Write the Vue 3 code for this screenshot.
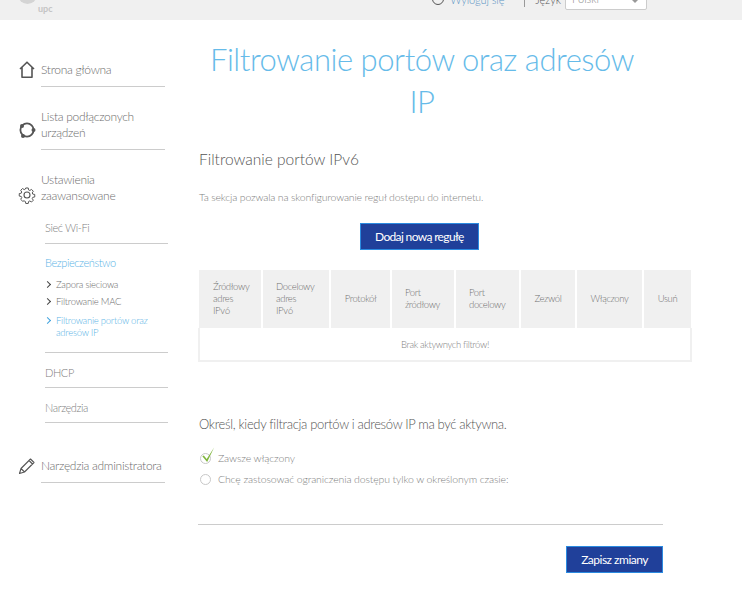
<script setup>
const columns = [
  { label: 'Źródłowy adres IPv6', cls: 'c1' },
  { label: 'Docelowy adres IPv6', cls: 'c2' },
  { label: 'Protokół', cls: 'c3 mid' },
  { label: 'Port źródłowy', cls: 'c4' },
  { label: 'Port docelowy', cls: 'c5' },
  { label: 'Zezwól', cls: 'c6 mid' },
  { label: 'Włączony', cls: 'c7 mid' },
  { label: 'Usuń', cls: 'c8 mid' }
]
</script>

<template>
  <div class="page">
    <header class="top">
      <div class="logo">
        <span class="logo-mark"></span>
        <span class="logo-text">upc</span>
      </div>
      <div class="top-right">
        <span class="power"></span>
        <span class="logout">Wyloguj się</span>
        <span class="sep"></span>
        <span class="lang">Język</span>
        <div class="select"><span>Polski</span><i></i></div>
      </div>
    </header>

    <div class="body">
      <aside class="side">
        <div class="nav-item first">
          <svg class="ico" viewBox="0 0 18 18"><path d="M2 8 9 1.2 16 8M4 6.5V16.2h10V6.5" fill="none" stroke="#555" stroke-width="1.6" stroke-linejoin="round"/></svg>
          <div class="nav-label">Strona główna</div>
        </div>
        <div class="nav-item second">
          <svg class="ico" viewBox="0 0 18 18"><circle cx="9" cy="9" r="6.6" fill="none" stroke="#555" stroke-width="1.8"/><circle cx="4" cy="5" r="2" fill="#555"/><circle cx="15.5" cy="9" r="2" fill="#555"/><circle cx="5" cy="15" r="2" fill="#555"/></svg>
          <div class="nav-label">Lista podłączonych urządzeń</div>
        </div>
        <div class="nav-item third">
          <svg class="ico gear" viewBox="0 0 18 18"><path d="M7.6 1.2h2.8l.4 2.2 1.3.6 1.9-1.2 2 2-1.2 1.9.6 1.3 2.2.4v2.8l-2.2.4-.6 1.3 1.2 1.9-2 2-1.9-1.2-1.3.6-.4 2.2H7.6l-.4-2.2-1.3-.6L4 15.8l-2-2 1.2-1.9-.6-1.3-2.2-.4V7.4l2.2-.4.6-1.3L2 3.8l2-2 1.9 1.2 1.3-.6z" transform="translate(.9 .9) scale(.9)" fill="none" stroke="#555" stroke-width="1.1" stroke-linejoin="round"/><circle cx="9" cy="9" r="3" fill="none" stroke="#555" stroke-width="1.1"/></svg>
          <div class="nav-label plain">Ustawienia zaawansowane</div>
        </div>

        <div class="sub">
          <div class="sub-item wifi">Sieć Wi-Fi</div>
          <div class="sub-item active-group">
            <div class="group-title">Bezpieczeństwo</div>
            <div class="leaf"><b class="chev"></b><span>Zapora sieciowa</span></div>
            <div class="leaf"><b class="chev"></b><span>Filtrowanie MAC</span></div>
            <div class="leaf on"><b class="chev"></b><span>Filtrowanie portów oraz adresów IP</span></div>
          </div>
          <div class="sub-item">DHCP</div>
          <div class="sub-item">Narzędzia</div>
        </div>

        <div class="nav-item admin">
          <svg class="ico" viewBox="0 0 18 18"><path d="M1.5 16.5 3 11.5 12.5 2l3.5 3.5L6.5 15zM3 11.5 6.5 15M11 3.5 14.5 7" fill="none" stroke="#555" stroke-width="1.1" stroke-linejoin="round"/></svg>
          <div class="nav-label">Narzędzia administratora</div>
        </div>
      </aside>

      <main class="main">
        <h1>Filtrowanie portów oraz adresów IP</h1>
        <h2>Filtrowanie portów IPv6</h2>
        <p class="intro">Ta sekcja pozwala na skonfigurowanie reguł dostępu do internetu.</p>
        <div class="add-row"><button class="btn add">Dodaj nową regułę</button></div>

        <table class="rules">
          <thead>
            <tr>
              <th v-for="c in columns" :key="c.label" :class="c.cls">{{ c.label }}</th>
            </tr>
          </thead>
          <tbody>
            <tr><td colspan="8">Brak aktywnych filtrów!</td></tr>
          </tbody>
        </table>

        <h3>Określ, kiedy filtracja portów i adresów IP ma być aktywna.</h3>
        <div class="radio">
          <span class="circle">
            <svg class="tick" viewBox="0 0 16 18"><path d="M1.5 10.5 3.2 9.5 6.5 13.5 15 0.5 7 17z" fill="#7fb63c"/></svg>
          </span>
          <span>Zawsze włączony</span>
        </div>
        <div class="radio second-radio">
          <span class="circle"></span>
          <span>Chcę zastosować ograniczenia dostępu tylko w określonym czasie:</span>
        </div>

        <div class="rule"></div>
        <div class="save-row"><button class="btn save">Zapisz zmiany</button></div>
      </main>
    </div>
  </div>
</template>

<style>
html, body { margin: 0; background: #fff; }
</style>

<style scoped>
.page {
  width: 742px;
  height: 595px;
  overflow: hidden;
  font-family: Lato, "Open Sans", sans-serif;
  font-weight: 300;
  color: #666;
}
.top {
  height: 20px;
  background: #f0f0f0;
  display: flex;
  justify-content: space-between;
  overflow: hidden;
}
.logo { position: relative; margin-left: 18px; width: 40px; height: 20px; }
.logo-mark {
  position: absolute;
  left: 0;
  top: -15px;
  width: 19px;
  height: 19px;
  border-radius: 50%;
  background: #d4d4d4;
}
.logo-text {
  position: absolute;
  left: 20px;
  top: 3px;
  font-size: 9px;
  font-weight: 700;
  line-height: 11px;
  color: #c4c4c4;
}
.top-right {
  display: flex;
  align-items: flex-end;
  height: 10px;
  margin-right: 95px;
  font-size: 11px;
  line-height: 14px;
}
.power {
  box-sizing: border-box;
  width: 12px;
  height: 12px;
  border: 1.5px solid #555;
  border-radius: 50%;
  margin: 0 6px 5px 0;
  flex: none;
}
.logout { color: #5a93c4; margin: 0 20px 3px 0; white-space: nowrap; letter-spacing: -.1px; }
.sep { width: 1px; height: 7px; background: #999; margin-right: 10px; align-self: flex-start; }
.lang { margin: 0 4px 3px 0; color: #555; }
.select {
  box-sizing: border-box;
  width: 82px;
  height: 21px;
  background: #fff;
  border: 1px solid #ccc;
  border-radius: 2px;
  padding: 2px 6px 0;
  display: flex;
  justify-content: space-between;
  color: #888;
  flex: none;
}
.select i {
  width: 0;
  height: 0;
  margin: 8px 2px 0 0;
  border: 3px solid transparent;
  border-top-color: #999;
}

.body { display: flex; }
.side { width: 147px; flex: none; padding-left: 18px; margin-right: 33px; }
.nav-item { display: flex; align-items: center; }
.ico { width: 18px; height: 18px; flex: none; margin-right: 5px; }
.nav-label {
  flex: 1;
  font-size: 12px;
  letter-spacing: -.3px;
  line-height: 16px;
  color: #6d6d6d;
  border-bottom: 1px solid #ccc;
}
.first { margin-top: 41px; align-items: flex-start; }
.first .nav-label { padding-bottom: 8px; padding-top: 1px; }
.second { margin-top: 22px; }
.second .nav-label { padding-bottom: 8px; }
.third { margin-top: 22px; align-items: flex-start; }
.third .ico { margin-top: 14px; }
.nav-label.plain { border-bottom: 0; }
.sub { margin: 0 -3px 0 27px; }
.sub-item {
  font-size: 11px;
  letter-spacing: -.4px;
  line-height: 14px;
  color: #808080;
  padding-bottom: 7px;
  border-bottom: 1px solid #ccc;
  margin-bottom: 13px;
}
.wifi { margin-top: 17px; padding-bottom: 8px; margin-bottom: 12px; }
.group-title { color: #5bb4e6; margin-bottom: 9px; }
.active-group { padding-bottom: 13px; }
.leaf {
  display: flex;
  font-size: 9.5px;
  letter-spacing: -.25px;
  line-height: 12px;
  color: #6d6d6d;
  margin-bottom: 5px;
}
.leaf:last-child { margin-bottom: 0; }
.leaf span { flex: 1; padding-right: 10px; }
.chev {
  width: 4px;
  height: 4px;
  margin: 3px 6px 0 0;
  border-top: 1.5px solid #444;
  border-right: 1.5px solid #444;
  transform: rotate(45deg);
  flex: none;
}
.leaf.on { color: #5bb4e6; margin-top: 7px; }
.leaf.on .chev { border-color: #3ea2de; }
.admin { margin-top: 34px; align-items: flex-start; }
.admin .nav-label { padding-bottom: 8px; padding-top: 1px; }

.main { flex: none; width: 493px; }
h1 {
  margin: 18px 0 0 -1px;
  width: 450px;
  text-align: center;
  font-size: 31px;
  letter-spacing: -.45px;
  line-height: 42px;
  font-weight: 300;
  color: #66bbe9;
}
h2 {
  margin: 27px 0 0 1px;
  font-size: 15.5px;
  line-height: 20px;
  font-weight: 300;
  color: #555;
}
.intro {
  margin: 21px 0 0 1px;
  font-size: 10.5px;
  letter-spacing: -.18px;
  line-height: 14px;
  color: #808080;
}
.add-row { margin-top: 19px; margin-left: 162px; }
.btn {
  box-sizing: border-box;
  height: 27px;
  padding: 0 14px;
  background: #20409a;
  border: 1px solid #2b8be0;
  color: #fff;
  font-family: inherit;
  font-weight: 400;
  font-size: 12px;
  display: block;
}
.add { letter-spacing: -.65px; }
.save { letter-spacing: -.5px; }
.rules {
  margin-top: 20px;
  width: 492px;
  table-layout: fixed;
  border-collapse: collapse;
  font-size: 9.5px;
  letter-spacing: -.35px;
}
.rules th {
  background: #f0f0f0;
  height: 58px;
  padding: 0 18px 0 13px;
  box-sizing: border-box;
  border-left: 2px solid #fff;
  font-weight: 300;
  line-height: 12px;
  text-align: left;
  color: #707070;
}
.rules th:first-child { border-left: 0; padding-left: 14px; }
.rules th.mid { padding: 0; text-align: center; }
.c1 { width: 63px; }
.c2 { width: 68px; }
.c3 { width: 61px; }
.c4 { width: 64px; }
.c5 { width: 65px; }
.c6 { width: 56px; }
.c7 { width: 67px; }
.c8 { width: 48px; }
.rules td {
  height: 33px;
  box-sizing: border-box;
  border: 2px solid #f0f0f0;
  border-top: 0;
  text-align: center;
  color: #808080;
}
h3 {
  margin: 53px 0 0 1px;
  font-size: 13px;
  letter-spacing: -.33px;
  line-height: 18px;
  font-weight: 300;
  color: #555;
}
.radio {
  display: flex;
  align-items: center;
  margin: 18px 0 0 2px;
  font-size: 10.5px;
  letter-spacing: -.13px;
  line-height: 14px;
  color: #808080;
}
.second-radio { margin-top: 7px; }
.circle {
  box-sizing: border-box;
  width: 11px;
  height: 11px;
  border: 1px solid #c8c8c8;
  border-radius: 50%;
  margin-right: 7px;
  position: relative;
  flex: none;
}
.tick {
  position: absolute;
  left: 0;
  top: -7px;
  width: 14px;
  height: 16px;
}
.rule { width: 465px; margin-top: 38px; border-top: 1px solid #ccc; }
.save-row { display: flex; justify-content: flex-end; width: 465px; margin-top: 21px; }
</style>
